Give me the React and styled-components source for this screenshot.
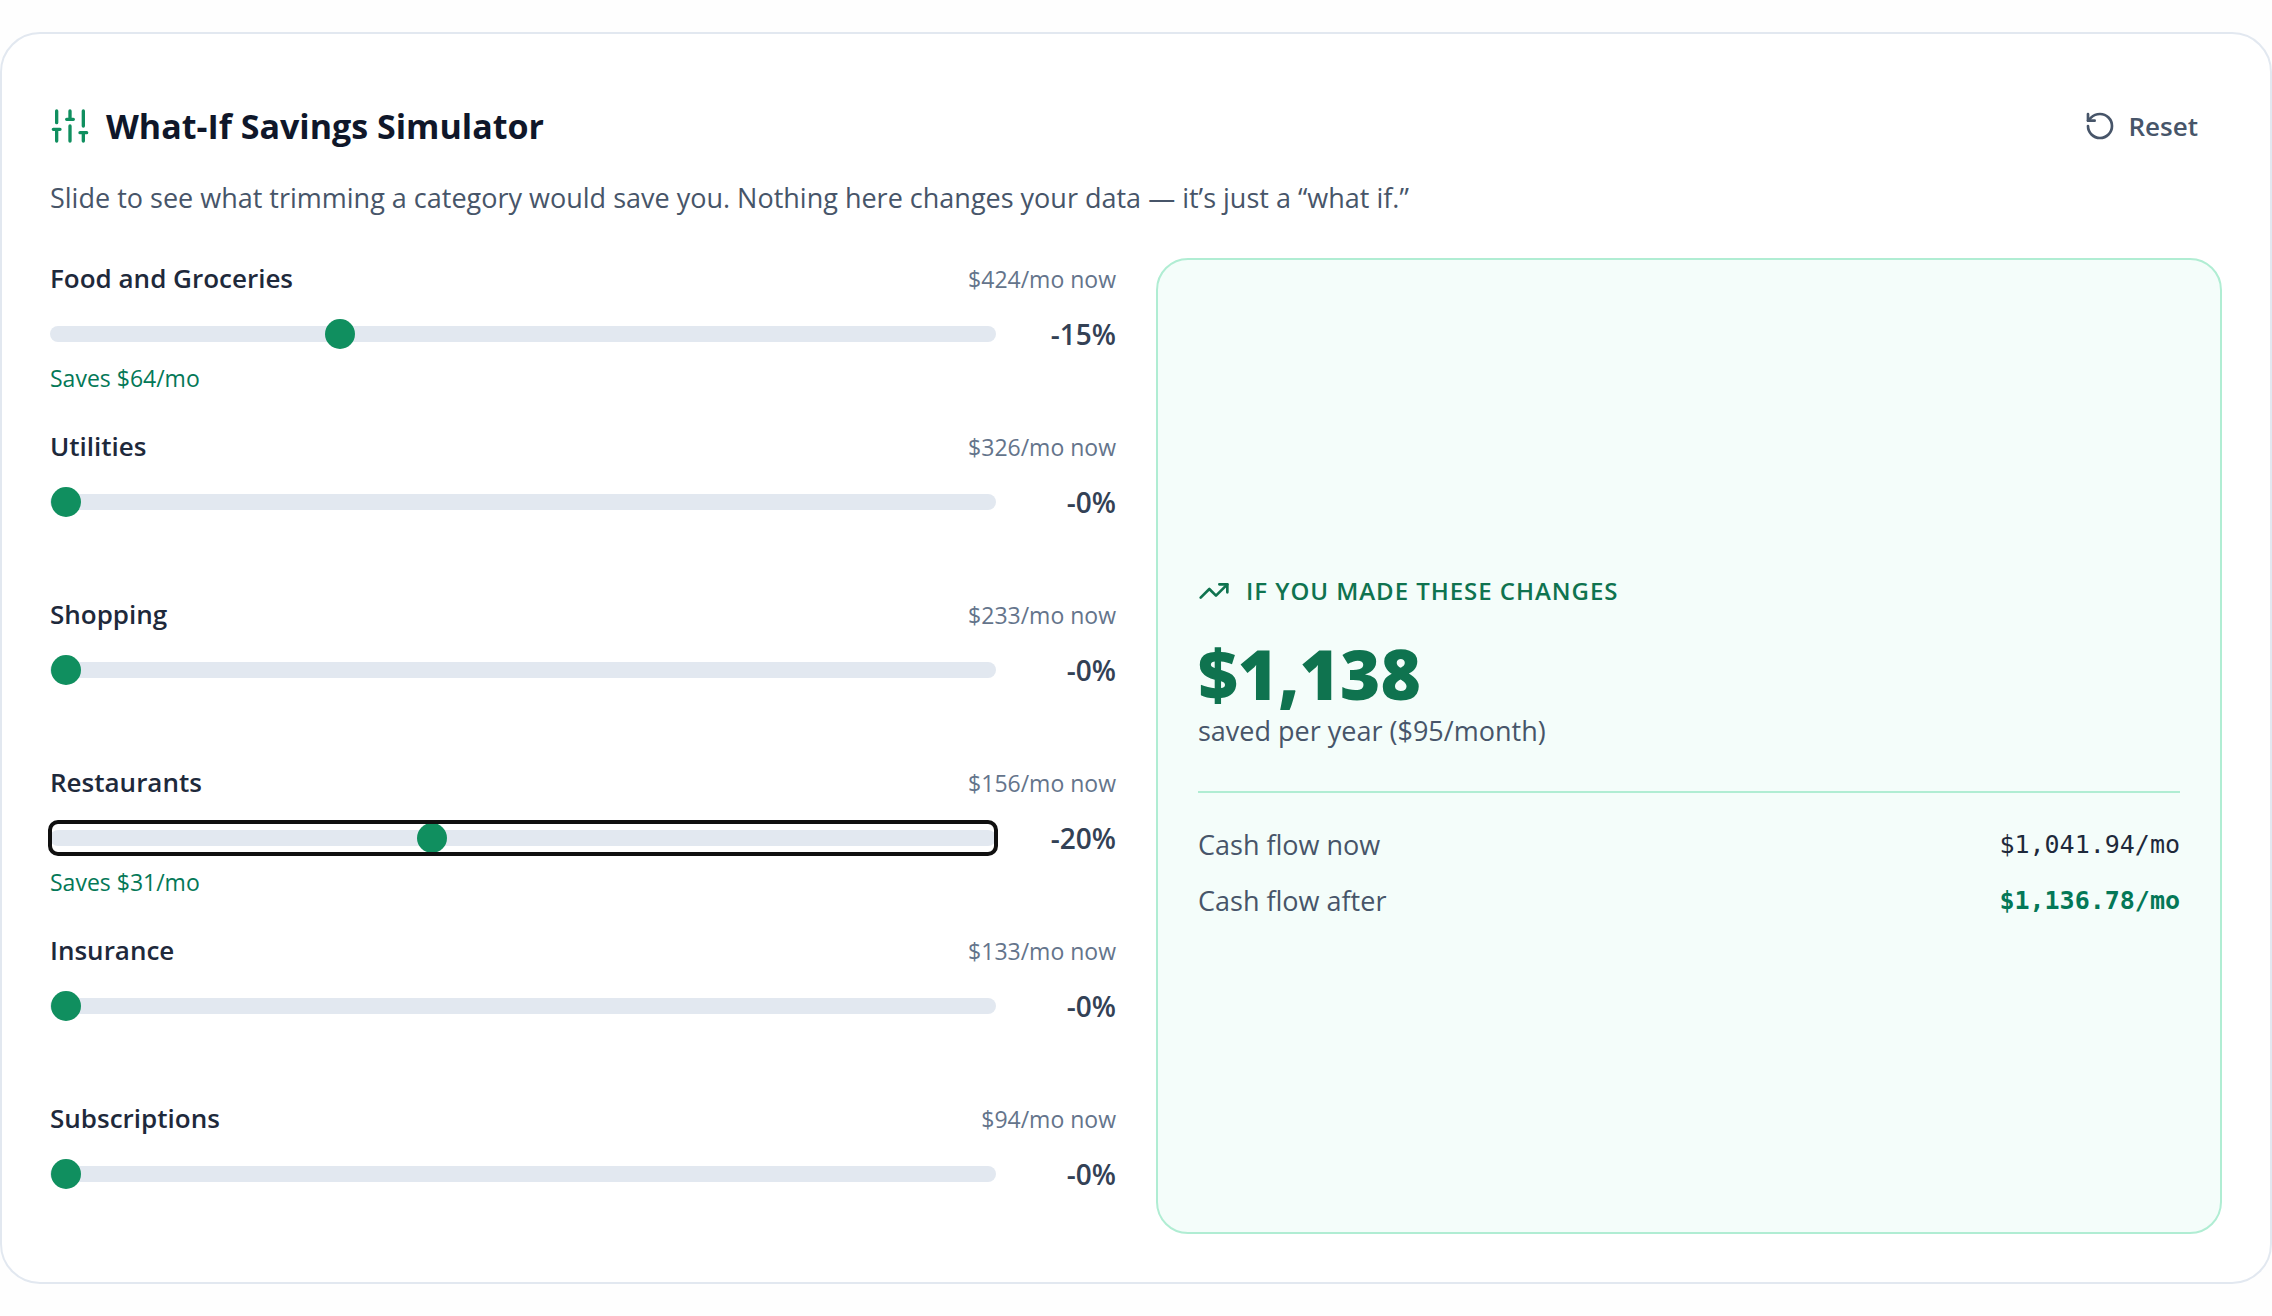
import React, { useState } from "react";
import styled, { createGlobalStyle } from "styled-components";
import { RotateCcw, TrendingUp } from "lucide-react";

const GlobalStyle = createGlobalStyle`
  *, *::before, *::after { box-sizing: border-box; }
  body {
    margin: 0;
    background: #fefefe;
    color: #1e293b;
    font-family: "Segoe UI", "Open Sans", "Noto Sans", sans-serif;
    font-size: 27px;
    line-height: 40px;
  }
  h2, p, dl, dd, dt { margin: 0; }
`;

const Page = styled.main`
  padding: 32px 0;
`;

const Card = styled.section`
  padding: 48px;
  border: 2px solid #e2e8f0;
  border-radius: 40px;
  background: #fff;
`;

const Header = styled.header`
  display: flex;
  align-items: center;
  justify-content: space-between;
  gap: 16px;
`;

const Title = styled.h2`
  display: flex;
  align-items: center;
  gap: 16px;
  color: #0f172a;
  font-size: 34px;
  font-weight: 700;
  line-height: 56px;

  svg { color: #108f5f; }
`;

const ResetButton = styled.button`
  display: flex;
  align-items: center;
  gap: 12px;
  min-height: 88px;
  padding: 0 24px;
  border: 0;
  border-radius: 16px;
  background: transparent;
  color: #475569;
  font: inherit;
  font-size: 26px;
  font-weight: 600;
  cursor: pointer;
`;

const Intro = styled.p`
  margin-top: 8px;
  color: #475569;
`;

const Columns = styled.div`
  display: grid;
  grid-template-columns: repeat(2, minmax(0, 1fr));
  gap: 40px;
  margin-top: 40px;
`;

const Categories = styled.div`
  display: flex;
  flex-direction: column;
  gap: 32px;
`;

const CategoryHead = styled.div`
  display: flex;
  align-items: baseline;
  justify-content: space-between;
  height: 40px;
`;

const CategoryName = styled.label`
  font-size: 26px;
  font-weight: 600;
`;

const Spend = styled.span`
  color: #64748b;
  font-size: 23px;
`;

const SliderRow = styled.div`
  display: flex;
  align-items: center;
  gap: 24px;
  margin-top: 16px;
`;

const Slider = styled.input`
  flex: 1;
  min-width: 0;
  height: 32px;
  margin: 0;
  border-radius: 8px;
  background: transparent;
  appearance: none;
  cursor: pointer;

  &::-webkit-slider-runnable-track {
    height: 16px;
    border-radius: 8px;
    background: #e2e8f0;
  }

  &::-webkit-slider-thumb {
    appearance: none;
    width: 32px;
    height: 32px;
    margin-top: -8px;
    border: 1px solid transparent;
    border-radius: 50%;
    background: #108f5f;
    background-clip: padding-box;
  }

  &:focus-visible {
    outline: 4px solid #101010;
    outline-offset: -2px;
  }
`;

const Percent = styled.output`
  width: 96px;
  color: #334155;
  font-size: 28px;
  font-weight: 600;
  text-align: right;
`;

const Saves = styled.p`
  min-height: 32px;
  margin-top: 8px;
  color: #047857;
  font-size: 23px;
  line-height: 32px;
`;

const Summary = styled.aside`
  display: flex;
  flex-direction: column;
  justify-content: center;
  padding: 40px;
  border: 2px solid #b0edd3;
  border-radius: 32px;
  background: #f4fdfa;
`;

const SummaryLabel = styled.p`
  display: flex;
  align-items: center;
  gap: 16px;
  color: #0f734f;
  font-size: 24px;
  font-weight: 600;
  letter-spacing: 0.04em;
  text-transform: uppercase;
`;

const Amount = styled.p`
  margin-top: 24px;
  color: #0f734f;
  font-size: 69px;
  font-weight: 800;
  line-height: 76px;
`;

const AmountNote = styled.p`
  color: #475569;
`;

const CashFlow = styled.dl`
  display: flex;
  flex-direction: column;
  gap: 16px;
  margin-top: 40px;
  padding-top: 32px;
  border-top: 2px solid #b0edd3;
`;

const FlowRow = styled.div`
  display: flex;
  justify-content: space-between;
  color: #475569;
`;

const FlowValue = styled.dd`
  color: ${(p) => (p.$after ? "#047857" : "#1e293b")};
  font-family: Consolas, "DejaVu Sans Mono", monospace;
  font-size: 25px;
  font-weight: ${(p) => (p.$after ? 700 : 400)};
`;

const CASH_FLOW = 1041.94;

const CATEGORIES = [
  { id: "food", name: "Food and Groceries", spend: 424.2, cut: 15 },
  { id: "utilities", name: "Utilities", spend: 326, cut: 0 },
  { id: "shopping", name: "Shopping", spend: 233, cut: 0 },
  { id: "restaurants", name: "Restaurants", spend: 156.05, cut: 20, focused: true },
  { id: "insurance", name: "Insurance", spend: 133, cut: 0 },
  { id: "subscriptions", name: "Subscriptions", spend: 94, cut: 0 },
];

const dollars = (n, digits = 0) =>
  "$" +
  n.toLocaleString("en-US", {
    minimumFractionDigits: digits,
    maximumFractionDigits: digits,
  });

function SlidersIcon() {
  return (
    <svg
      width="40"
      height="40"
      viewBox="0 0 24 24"
      fill="none"
      stroke="currentColor"
      strokeWidth="2"
      strokeLinecap="round"
      strokeLinejoin="round"
      aria-hidden="true"
    >
      <path d="M4 21v-7M4 10V3M12 21v-9M12 8V3M20 21v-5M20 12V3M2 14h4M10 8h4M18 16h4" />
    </svg>
  );
}

function Category({ item, cut, onChange }) {
  return (
    <div>
      <CategoryHead>
        <CategoryName htmlFor={item.id}>{item.name}</CategoryName>
        <Spend>{dollars(item.spend)}/mo now</Spend>
      </CategoryHead>
      <SliderRow>
        <Slider
          id={item.id}
          type="range"
          min={0}
          max={50}
          step={5}
          value={cut}
          autoFocus={item.focused}
          onChange={(e) => onChange(Number(e.target.value))}
        />
        <Percent htmlFor={item.id}>-{cut}%</Percent>
      </SliderRow>
      <Saves>{cut > 0 && `Saves ${dollars((item.spend * cut) / 100)}/mo`}</Saves>
    </div>
  );
}

export default function App() {
  const [cuts, setCuts] = useState(() =>
    Object.fromEntries(CATEGORIES.map((c) => [c.id, c.cut]))
  );
  const saved = CATEGORIES.reduce((sum, c) => sum + (c.spend * cuts[c.id]) / 100, 0);

  return (
    <Page>
      <GlobalStyle />
      <Card>
        <Header>
          <Title>
            <SlidersIcon />
            What-If Savings Simulator
          </Title>
          <ResetButton
            type="button"
            onClick={() => setCuts(Object.fromEntries(CATEGORIES.map((c) => [c.id, 0])))}
          >
            <RotateCcw size={32} aria-hidden="true" />
            Reset
          </ResetButton>
        </Header>
        <Intro>
          Slide to see what trimming a category would save you. Nothing here changes your data —
          it’s just a “what if.”
        </Intro>
        <Columns>
          <Categories>
            {CATEGORIES.map((item) => (
              <Category
                key={item.id}
                item={item}
                cut={cuts[item.id]}
                onChange={(value) => setCuts({ ...cuts, [item.id]: value })}
              />
            ))}
          </Categories>
          <Summary>
            <SummaryLabel>
              <TrendingUp size={32} aria-hidden="true" />
              If you made these changes
            </SummaryLabel>
            <Amount>{dollars(saved * 12)}</Amount>
            <AmountNote>saved per year ({dollars(saved)}/month)</AmountNote>
            <CashFlow>
              <FlowRow>
                <dt>Cash flow now</dt>
                <FlowValue>{dollars(CASH_FLOW, 2)}/mo</FlowValue>
              </FlowRow>
              <FlowRow>
                <dt>Cash flow after</dt>
                <FlowValue $after>{dollars(CASH_FLOW + saved, 2)}/mo</FlowValue>
              </FlowRow>
            </CashFlow>
          </Summary>
        </Columns>
      </Card>
    </Page>
  );
}
